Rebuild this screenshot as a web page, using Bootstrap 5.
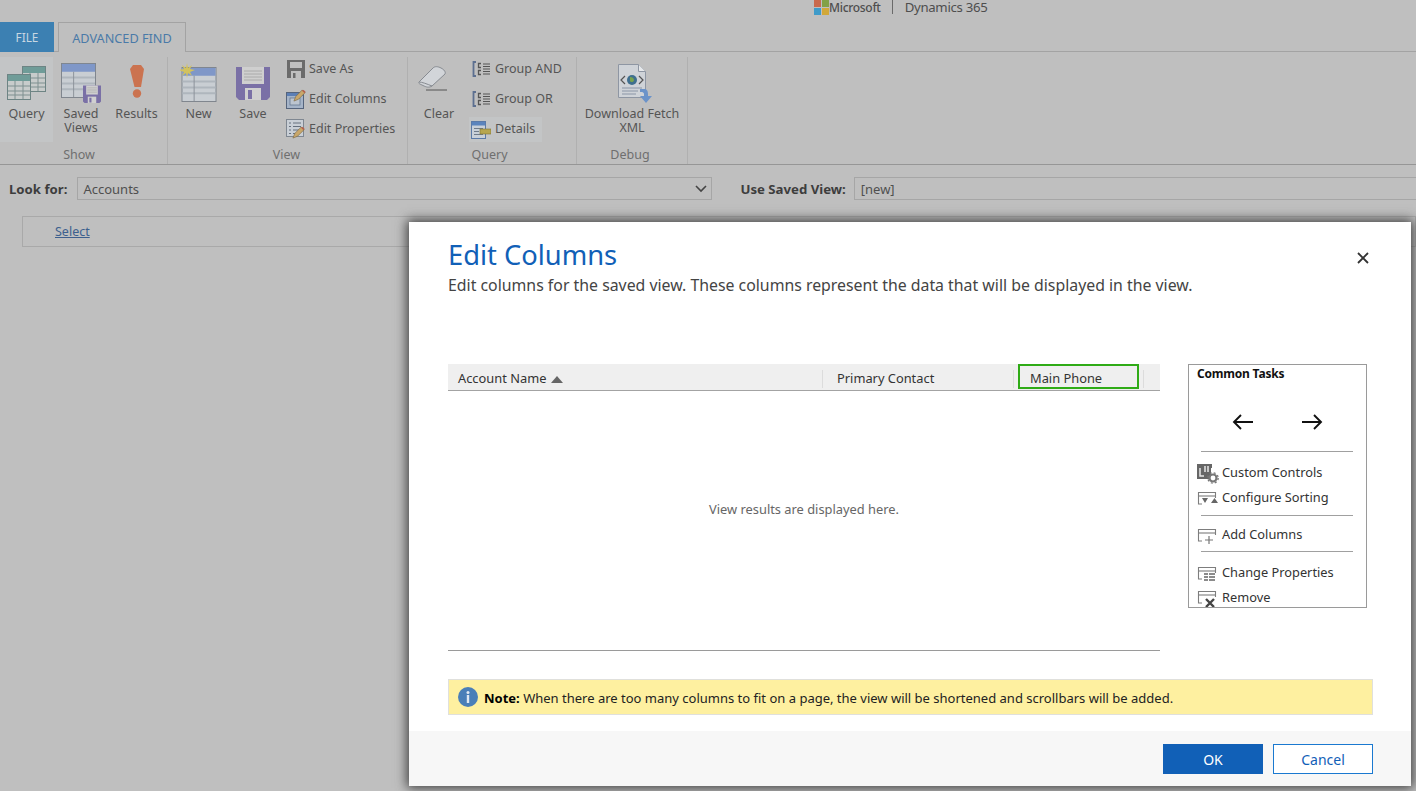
<!DOCTYPE html>
<html lang="en">
<head>
<meta charset="utf-8">
<title>Edit Columns</title>
<link href="https://cdn.jsdelivr.net/npm/bootstrap@5.3.0/dist/css/bootstrap.min.css" rel="stylesheet">
<style>
html,body{height:100%;}
body{margin:0;background:#bfbfbf;font-family:"Noto Sans","Open Sans",sans-serif;font-size:12.5px;color:#555;overflow:hidden;position:relative;}
.brand-bar{height:22px;padding-left:814px;color:#4e4e4e;}
.ms-logo{width:15px;height:15px;flex:none;}
.ms-word{font-size:12px;font-weight:500;letter-spacing:-.3px;line-height:15px;margin-right:11px;}
.ms-sep{width:1px;height:14px;background:#6a6a6a;margin-right:12px;}
.dyn-word{font-size:13.2px;line-height:15px;letter-spacing:-.3px;}
.tab-bar{height:30px;border-bottom:1px solid #a3a3a3;}
.file-tab{width:54px;height:30px;background:#3c80b2;color:#c9d7e2;text-align:center;line-height:31px;font-size:11.8px;}
.find-tab{width:128px;height:30px;margin-left:4px;border:1px solid #a3a3a3;border-bottom:0;background:#bfbfbf;color:#4a7aa8;text-align:center;line-height:31px;font-size:12.7px;}
.ribbon{height:113px;border-bottom:1px solid #969696;}
.rb-group{height:107px;margin-top:5px;border-right:1px solid #b0b0b0;}
.g-show{width:168px;}.g-view{width:240px;}.g-query{width:169px;}.g-debug{width:111px;}
.rb-items{height:85px;}
.big-btn{height:85px;text-align:center;line-height:14px;flex:none;}
.ico-slot{height:50px;display:flex;justify-content:center;align-items:flex-start;}
.t6{padding-top:6px;}.t7{padding-top:7px;}.t8{padding-top:8px;}.t9{padding-top:9px;}
.w-q{width:53px;}.w-s{width:56px;}.w-r{width:55px;}.w-n{width:61px;}.w-v{width:48px;}.w-c{width:62px;}.w-d{width:110px;}
.shift-c{justify-content:flex-start;padding-left:10px;}
.shift-d{padding-left:6px;}
.big-lbl{display:block;}
.rb-cap{text-align:center;color:#6f6f6f;line-height:14px;height:14px;margin-top:6px;}
.cap-show{padding-right:9px;}.cap-view{padding-right:2px;}.cap-query{padding-right:5px;}.cap-debug{padding-right:4px;}
.hl{background:#c3c5c6;}
.small-stack{flex:none;margin-top:-3px;}
.stack-v{margin-left:9px;}
.stack-q{margin-left:-1px;}
.sm-btn{height:30px;gap:3px;white-space:nowrap;}
.sm-btn svg{flex:none;}
.sm-q{gap:5px;padding-left:3px;}
.sm-d{gap:4px;padding-left:2px;width:73px;height:25px;margin-top:3px;}
.filter-row{height:52px;padding:12px 0 0 9px;}
.flt-lbl{font-weight:700;font-size:13.2px;color:#3d3d3d;line-height:24px;white-space:nowrap;}
.flt-box{height:23px;border:1px solid #a6a6a6;font-size:13px;line-height:22px;padding-left:5px;color:#4f4f4f;position:relative;}
.box-a{width:635px;margin-left:10px;flex:none;}
.box-b{width:600px;margin-left:8px;flex:none;padding-left:6px;}
.chev{position:absolute;right:4px;top:7px;}
.flt-lbl-b{margin-left:28px;}
.sel-bar{height:31px;margin-left:22px;border:1px solid #a9a9a9;padding:6px 0 0 32px;line-height:17px;margin-top:-1px;}
.sel-bar a{color:#3d5f8e;}
.edit-dlg{position:absolute;left:409px;top:222px;width:1002px;height:564px;background:#fff;box-shadow:0 0 11px 2px #3d3d3d;color:#333;}
.dlg-head{height:88px;padding:16px 0 0 39px;position:relative;}
.dlg-title{font-size:27.3px;line-height:33px;color:#1160b7;margin:0;font-weight:400;}
.dlg-sub{font-size:15.85px;line-height:20px;color:#444;margin:4px 0 0;}
.dlg-x{position:absolute;left:948px;top:30px;background:none;border:0;padding:0;line-height:0;}
.dlg-main{padding:54px 0 0 39px;height:369px;gap:28px;}
.grid-wrap{width:712px;height:287px;border-bottom:1px solid #9a9a9a;}
.grid-head{height:27px;background:#efefef;border-bottom:1.5px solid #a3a3a3;line-height:28px;font-size:12.85px;color:#333;}
.hc{height:25px;flex:none;position:relative;}
.hc-a{width:375px;padding-left:10px;}
.hc-b{width:195px;padding-left:14px;}
.hc-c{width:121px;border:2px solid #2fab16;padding-left:10px;line-height:24px;}
.hc-sep::after{content:"";position:absolute;right:0;top:6px;height:18px;width:1px;background:#dcdcdc;}
.hc-b.hc-sep::after{right:4px;}
.hc-tail{flex:none;width:5px;margin-left:4px;border-left:1px solid #dcdcdc;height:18px;margin-top:6px;}
.sort-up{display:inline-block;margin-left:5px;width:0;height:0;border-left:6px solid transparent;border-right:6px solid transparent;border-bottom:7px solid #666;}
.grid-empty{height:259px;padding-bottom:22px;font-size:12.85px;color:#666;}
.task-box{width:179px;height:244px;border:1px solid #9a9a9a;padding:0 0 0 8px;overflow:hidden;flex:none;}
.task-ttl{font-weight:700;font-size:12px;line-height:16px;color:#111;margin-top:1px;letter-spacing:-.2px;}
.arrows{height:69px;padding:10px 0 0 35px;gap:47px;}
.task-rule{width:152px;height:1px;background:#a0a0a0;margin-left:4px;}
.task-item{height:25px;gap:3px;color:#333;font-size:12.8px;white-space:nowrap;}
.task-item svg{flex:none;}
.task-item span{padding-bottom:2px;}
.sp-9{margin-top:9px;}.sp-7{margin-top:7px;}.sp-4{margin-top:4px;}.sp-3{margin-top:3px;}
.note-row{margin:0 38px 0 39px;height:36px;background:#fef0a0;border:1px solid #e0e0dc;padding-left:9px;gap:6px;font-size:13px;color:#222;}
.note-row b{color:#000;}
.note-txt{padding-top:4px;}
.dlg-foot{height:55px;background:#f7f7f7;margin-top:16px;padding:13px 38px 0 0;gap:10px;}
.act{width:100px;height:30px;padding:1px 0 0;border-radius:0;font-size:14px;line-height:26px;}
.act-ok{background:#1160b7;border:1px solid #1160b7;color:#fff;}
.act-no{background:#fff;border:1px solid #1a79d0;color:#1160b7;}
</style>
</head>
<body>
<svg width="0" height="0" class="d-block" aria-hidden="true">
<defs>
<symbol id="i-grid" viewBox="0 0 24 26"><rect x=".5" y=".5" width="23" height="25" fill="#c8cccb" stroke="#6d8484"/><rect x="1" y="1" width="22" height="6" fill="#6f9c98"/><path d="M1 12h22M1 17h22M1 21h22M8 7v18M16 7v18" stroke="#7f9090" fill="none"/></symbol>
<symbol id="i-floppy" viewBox="0 0 34 34"><path d="M0 1h34v30l-3 3H3l-3-3z" fill="#7a70a6"/><rect x="6" y="1" width="22" height="17" fill="#cfcfcf"/><path d="M8 5h18M8 8h18M8 11h18M8 14h18" stroke="#aaa"/><rect x="9" y="22" width="16" height="12" fill="#d0d0d0"/><rect x="12" y="24" width="4" height="9" fill="#7a70a6"/></symbol>
<symbol id="i-table" viewBox="0 0 36 36"><rect x=".5" y=".5" width="35" height="35" fill="#c9ced3" stroke="#7e848c"/><rect x="1" y="1" width="34" height="8" fill="#7f97c8"/><path d="M1 15h34M1 21h34M1 27h34" stroke="#afb6bd" stroke-width="2"/><path d="M13 9v26" stroke="#8b929a"/></symbol>
<symbol id="i-pencil" viewBox="0 0 14 14"><path d="M1 13l2-5 7-7 3 3-7 7z" fill="#c9a76a" stroke="#7d6a47" stroke-width=".7"/><path d="M9.500 1.500l3 3 1-1.500-2-2z" fill="#b5604e"/></symbol>
<symbol id="i-bracket" viewBox="0 0 18 16"><path d="M4 1H1.500v14H4" fill="none" stroke="#5c6f90" stroke-width="1.800"/><path d="M9 2.500H6.500v4H9M9 9.500H6.500v4H9" fill="none" stroke="#555" stroke-width="1.300"/><path d="M11 3h7M11 8h7M11 13h7M11 5.500h7M11 10.500h7" stroke="#555" stroke-width="1.200"/></symbol>
<symbol id="t-base" viewBox="0 0 20 16"><path d="M5 13H1.500V1.500h17V7" fill="none" stroke="#7d7d7d" stroke-width="1.100"/><path d="M2 5h16" stroke="#7d7d7d" stroke-width="1.100"/></symbol>
</defs>
</svg>

<div class="brand-bar d-flex align-items-start">
  <svg class="ms-logo" viewBox="0 0 15 15"><rect width="7" height="7" fill="#c96a4e"/><rect x="8" width="7" height="7" fill="#82a146"/><rect y="8" width="7" height="7" fill="#3f9bc9"/><rect x="8" y="8" width="7" height="7" fill="#d1a83a"/></svg>
  <span class="ms-word">Microsoft</span><span class="ms-sep"></span><span class="dyn-word">Dynamics 365</span>
</div>
<div class="tab-bar d-flex">
  <div class="file-tab">FILE</div>
  <div class="find-tab">ADVANCED FIND</div>
</div>

<div class="ribbon d-flex">
  <div class="rb-group g-show">
    <div class="rb-items d-flex">
      <div class="big-btn hl w-q">
        <div class="ico-slot t9"><svg width="40" height="34" viewBox="0 0 40 34"><use href="#i-grid" x="15" y="0" width="24" height="26"/><use href="#i-grid" x="0" y="8" width="24" height="26"/></svg></div>
        <span class="big-lbl">Query</span>
      </div>
      <div class="big-btn w-s">
        <div class="ico-slot t6"><svg width="40" height="40" viewBox="0 0 40 40"><use href="#i-table" x="0" y="0" width="35" height="35"/><use href="#i-floppy" x="22" y="22" width="18" height="18"/></svg></div>
        <span class="big-lbl">Saved<br>Views</span>
      </div>
      <div class="big-btn w-r">
        <div class="ico-slot t8"><svg width="14" height="33" viewBox="0 0 14 33"><path d="M3 0h8l3 4-3 18H4.500L0 4z" fill="#cb7350"/><circle cx="7" cy="28.500" r="4.200" fill="#cb7350"/></svg></div>
        <span class="big-lbl">Results</span>
      </div>
    </div>
    <div class="rb-cap cap-show">Show</div>
  </div>

  <div class="rb-group g-view">
    <div class="rb-items d-flex">
      <div class="big-btn w-n">
        <div class="ico-slot t6"><svg width="38" height="39" viewBox="0 0 38 39"><use href="#i-table" x="1" y="4" width="36" height="35"/><path d="M7 0l1 5 4-3-2 4 5 1-5 2 2 4-4-3-1 5-1-5-4 3 2-4-5-2 5-1-2-4 4 3z" fill="#d2c25e"/></svg></div>
        <span class="big-lbl">New</span>
      </div>
      <div class="big-btn w-v">
        <div class="ico-slot t9"><svg width="34" height="34" viewBox="0 0 34 34"><use href="#i-floppy" width="34" height="34"/></svg></div>
        <span class="big-lbl">Save</span>
      </div>
      <div class="small-stack stack-v">
        <div class="sm-btn d-flex align-items-center"><svg width="20" height="20" viewBox="0 0 20 20"><path d="M1 1h18v18H1z" fill="#6b6b6b"/><rect x="4" y="3" width="12" height="6" fill="#bfbfbf"/><rect x="5" y="12" width="10" height="7" fill="#bfbfbf"/><rect x="7" y="14" width="2.500" height="5" fill="#6b6b6b"/></svg><span>Save As</span></div>
        <div class="sm-btn d-flex align-items-center"><svg width="20" height="20" viewBox="0 0 20 20"><rect x=".5" y="3.500" width="17" height="16" fill="#a5b4c8" stroke="#55647c"/><rect x="1" y="4" width="16" height="3" fill="#5c7fb5"/><rect x="4" y="9" width="10" height="7" fill="#bcc5d0" stroke="#5d6f8a" stroke-width=".7"/><use href="#i-pencil" x="7" y="0" width="13" height="13"/></svg><span>Edit Columns</span></div>
        <div class="sm-btn d-flex align-items-center"><svg width="20" height="20" viewBox="0 0 20 20"><rect x=".5" y=".5" width="17" height="17" fill="#c9cfd6" stroke="#7f8791"/><path d="M3 4h2M7 4h8M3 7.500h2M7 7.500h8M3 11h2M7 11h6M3 14.500h2M7 14.500h3" stroke="#66707e"/><use href="#i-pencil" x="6" y="7" width="13" height="13"/></svg><span>Edit Properties</span></div>
      </div>
    </div>
    <div class="rb-cap cap-view">View</div>
  </div>

  <div class="rb-group g-query">
    <div class="rb-items d-flex">
      <div class="big-btn w-c">
        <div class="ico-slot t9 shift-c"><svg width="30" height="25" viewBox="0 0 30 25"><path d="M1 16L15 2c2-2 5-1.500 8 0s5 4 4 6L14 20c-3 2-6 1-9-.5s-5-2-4-3.500z" fill="#d2d5d9" stroke="#878b91"/><path d="M1 16c3 0 8 2 13 4" stroke="#878b91" fill="none"/><path d="M8 24h21" stroke="#555"/></svg></div>
        <span class="big-lbl">Clear</span>
      </div>
      <div class="small-stack stack-q">
        <div class="sm-btn sm-q d-flex align-items-center"><svg width="18" height="16"><use href="#i-bracket" width="18" height="16"/></svg><span>Group AND</span></div>
        <div class="sm-btn sm-q d-flex align-items-center"><svg width="18" height="16"><use href="#i-bracket" width="18" height="16"/></svg><span>Group OR</span></div>
        <div class="sm-btn sm-d hl d-flex align-items-center"><svg width="20" height="18" viewBox="0 0 20 18"><rect x=".5" y=".5" width="14" height="17" fill="#c9d0d9" stroke="#5b7aa8"/><rect x="1" y="1" width="13" height="3.500" fill="#5b84bd"/><path d="M3 7.500h9M3 10.500h5M3 13.500h9" stroke="#6f7b8a"/><rect x="9" y="8" width="11" height="5" fill="#b7a64f" stroke="#7f7333" stroke-width=".6"/></svg><span>Details</span></div>
      </div>
    </div>
    <div class="rb-cap cap-query">Query</div>
  </div>

  <div class="rb-group g-debug">
    <div class="rb-items d-flex">
      <div class="big-btn w-d">
        <div class="ico-slot t7 shift-d"><svg width="34" height="39" viewBox="0 0 34 39"><path d="M.5.500h20l7 7v26H.5z" fill="#cfd3d8" stroke="#8e96a3"/><path d="M20.500.500v7h7" fill="#e6e8ea" stroke="#8e96a3"/><path d="M7 12l-4 4 4 4M21 12l4 4-4 4" fill="none" stroke="#555" stroke-width="1.200"/><circle cx="14" cy="16" r="5" fill="#3f6f8f"/><path d="M12 13c2 0 4 1 4 3s-3 3-4 1z" fill="#77a34e"/><path d="M4 24h20M4 27h16M4 30h14" stroke="#8a95a6"/><path d="M22 25h4c3 0 4 2 4 5v2h4l-6 7-6-7h4v-2c0-1-1-2-2-2h-2z" fill="#6b93c9"/></svg></div>
        <span class="big-lbl">Download Fetch<br>XML</span>
      </div>
    </div>
    <div class="rb-cap cap-debug">Debug</div>
  </div>
</div>

<div class="filter-row d-flex">
  <span class="flt-lbl">Look for:</span>
  <div class="flt-box box-a">Accounts<svg class="chev" width="12" height="8" viewBox="0 0 12 8"><path d="M1 1l5 5 5-5" fill="none" stroke="#444" stroke-width="1.600"/></svg></div>
  <span class="flt-lbl flt-lbl-b">Use Saved View:</span>
  <div class="flt-box box-b">[new]</div>
</div>
<div class="sel-bar"><a href="#">Select</a></div>

<div class="edit-dlg d-flex flex-column" role="dialog">
  <div class="dlg-head">
    <h1 class="dlg-title">Edit Columns</h1>
    <p class="dlg-sub">Edit columns for the saved view. These columns represent the data that will be displayed in the view.</p>
    <button class="dlg-x" type="button" aria-label="Close"><svg width="12" height="12" viewBox="0 0 12 12"><path d="M1 1l10 10M11 1L1 11" stroke="#333" stroke-width="1.800"/></svg></button>
  </div>
  <div class="dlg-main d-flex">
    <div class="grid-wrap">
      <div class="grid-head d-flex">
        <div class="hc hc-a hc-sep">Account Name<span class="sort-up"></span></div>
        <div class="hc hc-b hc-sep">Primary Contact</div>
        <div class="hc hc-c">Main Phone</div>
        <div class="hc-tail"></div>
      </div>
      <div class="grid-empty d-flex align-items-center justify-content-center">View results are displayed here.</div>
    </div>
    <div class="task-box">
      <div class="task-ttl">Common Tasks</div>
      <div class="arrows d-flex align-items-center">
        <svg width="22" height="16" viewBox="0 0 22 16"><path d="M21 8H2M9 1L2 8l7 7" fill="none" stroke="#111" stroke-width="1.900"/></svg>
        <svg width="22" height="16" viewBox="0 0 22 16"><path d="M1 8h19M13 1l7 7-7 7" fill="none" stroke="#111" stroke-width="1.900"/></svg>
      </div>
      <div class="task-rule"></div>
      <div class="task-item sp-9 d-flex align-items-center"><svg width="22" height="20" viewBox="0 0 22 20"><path d="M0 0h15v4h-1v11H0z" fill="#666"/><path d="M3 4v8h4M8 2v6M11 2v6" stroke="#e8e8e8" stroke-width="1.500" fill="none"/><circle cx="16" cy="14" r="3.500" fill="#fff" stroke="#777" stroke-width="2.200"/><circle cx="16" cy="14" r="5.200" fill="none" stroke="#777" stroke-width="1.300" stroke-dasharray="2 2.100"/></svg><span>Custom Controls</span></div>
      <div class="task-item d-flex align-items-center"><svg width="22" height="16" viewBox="0 0 22 16"><use href="#t-base" width="20" height="16"/><path d="M5 7h6l-3 5zM14 12h7l-3.500-5z" fill="#666"/></svg><span>Configure Sorting</span></div>
      <div class="task-rule sp-4"></div>
      <div class="task-item sp-7 d-flex align-items-center"><svg width="22" height="16" viewBox="0 0 22 16"><use href="#t-base" width="20" height="16"/><path d="M12 8v8M8 12h8" stroke="#777" stroke-width="1.200"/></svg><span>Add Columns</span></div>
      <div class="task-rule sp-3"></div>
      <div class="task-item sp-9 d-flex align-items-center"><svg width="22" height="16" viewBox="0 0 22 16"><use href="#t-base" width="20" height="16"/><path d="M7 8h4M7 11h4M7 14h4M12 8h6M12 11h6M12 14h6" stroke="#666" stroke-width="1.600"/></svg><span>Change Properties</span></div>
      <div class="task-item d-flex align-items-center"><svg width="22" height="18" viewBox="0 0 22 18"><use href="#t-base" width="20" height="16"/><path d="M9 9l8 8M17 9l-8 8" stroke="#444" stroke-width="2.400"/></svg><span>Remove</span></div>
    </div>
  </div>
  <div class="note-row d-flex align-items-center">
    <svg width="20" height="20" viewBox="0 0 20 20" class="flex-shrink-0"><circle cx="10" cy="10" r="10" fill="#4a7fb8"/><rect x="8.800" y="8" width="2.400" height="8" fill="#dfe8f2"/><circle cx="10" cy="5.500" r="1.500" fill="#dfe8f2"/></svg>
    <span class="note-txt"><b>Note:</b> When there are too many columns to fit on a page, the view will be shortened and scrollbars will be added.</span>
  </div>
  <div class="dlg-foot d-flex justify-content-end">
    <button class="act act-ok" type="button">OK</button>
    <button class="act act-no" type="button">Cancel</button>
  </div>
</div>
<script src="https://cdn.jsdelivr.net/npm/bootstrap@5.3.0/dist/js/bootstrap.bundle.min.js"></script>
</body>
</html>
